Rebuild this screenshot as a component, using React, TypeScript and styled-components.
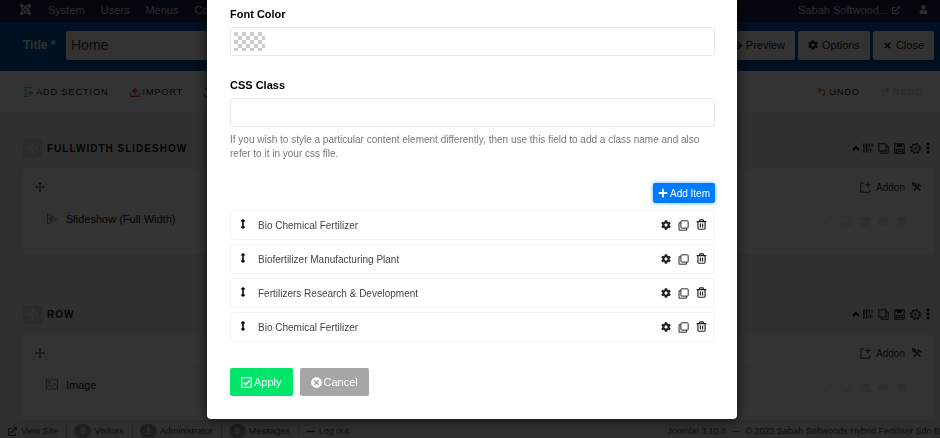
import React from "react";
import styled, { createGlobalStyle } from "styled-components";
import {
  FaArrowsAltV,
  FaCog,
  FaExternalLinkAlt,
  FaEye,
  FaJoomla,
  FaMinus,
  FaPlus,
  FaTimes,
  FaTimesCircle,
  FaUser,
} from "react-icons/fa";

const GlobalStyle = createGlobalStyle`
  *, *::before, *::after { box-sizing: border-box; }
  body {
    margin: 0;
    overflow: hidden;
    font-family: "Liberation Sans", Arial, sans-serif;
    font-size: 11px;
    color: #222;
  }
  button, input { font: inherit; color: inherit; }
  button { cursor: pointer; }
  svg { display: block; flex: none; }
`;

/* ---------- icons ---------- */

type IconProps = { size?: number };

const Line = ({ size = 12, children }: IconProps & { children: React.ReactNode }) => (
  <svg width={size} height={size} viewBox="0 0 16 16" fill="none" stroke="currentColor" strokeWidth="1.4" aria-hidden="true">
    {children}
  </svg>
);

const CloneIcon = ({ size }: IconProps) => (
  <Line size={size}>
    <rect x="4.2" y="1.2" width="10.6" height="10.6" rx="1" />
    <path d="M4 4H1.5v10.8h10.8V12" />
  </Line>
);

const CopyDownIcon = ({ size }: IconProps) => (
  <Line size={size}>
    <rect x="1.2" y="1.2" width="10.4" height="10.4" />
    <path d="M12 4.4h2.8v10.4H4.4V12" />
  </Line>
);

const TrashIcon = ({ size }: IconProps) => (
  <Line size={size}>
    <path d="M1 3.8h14M5.2 3.6V2.2c0-.7.4-1 1-1h3.6c.6 0 1 .3 1 1v1.4M2.8 4v9.6c0 .8.4 1.3 1.2 1.3h8c.8 0 1.2-.5 1.2-1.3V4M6.4 6.6v5.6M9.6 6.6v5.6" strokeWidth="1.7" />
  </Line>
);

const SaveIcon = ({ size }: IconProps) => (
  <Line size={size}>
    <path d="M1.2 1.2h13.6v13.6H1.2zM3.5 14.5V9.2h9v5.3M5 12h6" />
    <path d="M4.5 1.5h7v3.6h-7z" fill="currentColor" />
  </Line>
);

const CogLineIcon = ({ size }: IconProps) => (
  <Line size={size}>
    <circle cx="8" cy="8" r="5.8" />
    <circle cx="8" cy="8" r="7" strokeWidth="1.8" strokeDasharray="2.75 2.75" />
    <circle cx="8" cy="8" r="1.8" />
  </Line>
);

const DotsIcon = () => (
  <svg width="4" height="12" viewBox="0 0 4 12" fill="currentColor" aria-hidden="true">
    <circle cx="2" cy="2" r="1.5" />
    <circle cx="2" cy="6" r="1.5" />
    <circle cx="2" cy="10" r="1.5" />
  </svg>
);

const ChevronUpIcon = () => (
  <svg width="8" height="6" viewBox="0 0 8 6" fill="none" stroke="currentColor" strokeWidth="2" aria-hidden="true">
    <path d="M1 5l3-3 3 3" />
  </svg>
);

const ColumnsIcon = () => (
  <svg width="10" height="10" viewBox="0 0 11 10" fill="none" stroke="currentColor" aria-hidden="true">
    <path d="M1 0v10M4 0v10" strokeWidth="1.5" />
    <path d="M7 0v4M10 0v4M8 5v5M5.5 7.5h5" strokeWidth="1.2" />
  </svg>
);

const MoveIcon = ({ size }: IconProps) => (
  <Line size={size}>
    <circle cx="8" cy="8" r="2.2" />
    <path d="M8 2v2.5M8 11.5V14M2 8h2.5M11.5 8H14" strokeWidth="1.2" />
    <path d="M8 0l2.4 3H5.6zM8 16l2.4-3H5.6zM0 8l3-2.4v4.8zM16 8l-3-2.4v4.8z" fill="currentColor" stroke="none" />
  </Line>
);

const AddSectionIcon = () => (
  <Line size={10}>
    <path d="M1 1h14M1 5h7M1 9h5M1 15h9M1 12h5M11.5 5v9M7 9.5h9" />
  </Line>
);

const ImportIcon = () => (
  <Line size={10}>
    <path d="M1 9.5V15h14V9.5M8 12V3" strokeWidth="2" />
    <path d="M3.5 7L8 2l4.5 5z" fill="currentColor" />
  </Line>
);

const ExportIcon = () => (
  <Line size={10}>
    <path d="M1 9.5V15h14V9.5M8 1v8" strokeWidth="2" />
    <path d="M1 3l4-1 2 4z" fill="currentColor" />
  </Line>
);

const UndoIcon = () => (
  <Line size={9}>
    <path d="M6 1L2 5.2l4 4.3M2 5.2h7c7 0 6.5 8 1 9.5" strokeWidth="2.4" />
  </Line>
);

const RedoIcon = () => (
  <Line size={9}>
    <path d="M10 1l4 4.2-4 4.3M14 5.2H7c-7 0-6.5 8-1 9.5" strokeWidth="2.4" />
  </Line>
);

const AddonIcon = () => (
  <Line size={11}>
    <path d="M6 1.5H1.2v13.3h13.3V11M11.5 0v8M7.5 4h8" />
  </Line>
);

const ToolsIcon = () => (
  <Line size={10}>
    <path d="M4 4l9.5 10M12 4.5L3 14" strokeWidth="2.5" />
    <path d="M1 1l1 4 3 .5L6 3zM10 1.5c0 3 1 4.5 5 4.5" strokeWidth="2" />
  </Line>
);

const SlideshowIcon = () => (
  <Line size={12}>
    <path d="M2 1v14M2 1l12.5 7L2 15M5 5.5v5L9.5 8z" strokeWidth="1.2" />
  </Line>
);

const PictureIcon = () => (
  <svg width="12" height="11" viewBox="0 0 13 11" fill="none" stroke="currentColor" aria-hidden="true">
    <path d="M.5.5h12v10H.5zM1 8l3-2.5L6 8l3-4 3 4" />
    <circle cx="3.5" cy="3.3" r="1" />
  </svg>
);

const PencilIcon = () => (
  <Line size={11}>
    <path d="M1.5 14.5l.8-3L12 1.8l2.3 2.3-9.7 9.7z" />
  </Line>
);

const CheckBoxIcon = () => (
  <Line size={11}>
    <path d="M1 1h14v14H1z" strokeWidth="1.8" />
    <path d="M4 8l3 3 5.5-6" strokeWidth="2.2" />
  </Line>
);

/* ---------- page behind the dialog ---------- */

const Page = styled.div`
  display: flex;
  flex-direction: column;
  height: 100vh;
  overflow: hidden;
  background: #eee;
`;

const NavBar = styled.nav`
  display: flex;
  align-items: center;
  flex: none;
  gap: 16px;
  height: 22px;
  padding: 0 4px 3px 19px;
  background: #10223e;
  color: #d9d9d9;
  font-size: 11px;
  white-space: nowrap;
  a { color: inherit; text-decoration: none; }
`;

const NavUser = styled.a`
  display: flex;
  align-items: center;
  gap: 4px;
  margin-left: auto;
`;

const UserMenu = styled.button`
  display: flex;
  padding: 0 8px 0 3px;
  border: 0;
  background: none;
`;

const TitleBar = styled.header`
  display: flex;
  align-items: center;
  flex: none;
  gap: 3px;
  height: 49px;
  padding: 0 6px 3px 23px;
  background: #00509f;
`;

const TitleLabel = styled.label`
  width: 40px;
  color: #eee;
  font-size: 12px;
  font-weight: bold;
  white-space: nowrap;
`;

const TitleInput = styled.input`
  flex: 1;
  min-width: 0;
  height: 29px;
  padding: 0 5px;
  border: 0;
  border-radius: 2px;
  background: #fff;
  color: #333;
  font-size: 14px;
`;

const HeaderButton = styled.button`
  display: flex;
  align-items: center;
  justify-content: center;
  gap: 4px;
  height: 29px;
  padding: 0 10px;
  border: 0;
  border-radius: 2px;
  background: #fff;
  color: #222;
  font-size: 11px;
`;

const ToolBar = styled.div`
  display: flex;
  align-items: center;
  flex: none;
  gap: 21px;
  height: 42px;
  padding: 0 17px 0 23px;
  border-bottom: 1px solid #e4e4e4;
  background: #fff;
`;

const ToolButton = styled.button<{ $tint: string; $faded?: boolean; $end?: boolean }>`
  display: flex;
  align-items: center;
  gap: 3px;
  margin-left: ${(p) => (p.$end ? "auto" : "0")};
  padding: 0;
  border: 0;
  background: none;
  color: ${(p) => (p.$faded ? "#ccc" : "#111")};
  font-size: 9px;
  letter-spacing: 1px;
  svg { color: ${(p) => p.$tint}; }
`;

const Builder = styled.main`
  flex: 1;
  min-height: 0;
  padding: 25px 6px 0 23px;
  overflow: hidden;
`;

const Section = styled.section`
  margin-bottom: 50px;
`;

const SectionHead = styled.div`
  display: flex;
  align-items: center;
  gap: 5px;
  height: 20px;
  margin-bottom: 11px;
  padding-right: 4px;
  color: #111;
`;

const SectionName = styled.h2`
  flex: 1;
  margin: 0;
  font-size: 10px;
  letter-spacing: 1px;
`;

const LayoutTools = styled.div`
  display: flex;
  align-items: center;
  gap: 3px;
`;

const Handle = styled.button`
  display: flex;
  align-items: center;
  justify-content: center;
  width: 19px;
  height: 19px;
  padding: 0;
  border: 0;
  border-radius: 2px;
  background: #d6d6d6;
  color: #fff;
`;

const IconButton = styled.button`
  display: flex;
  padding: 0;
  border: 0;
  background: none;
`;

const Columns = styled.div`
  display: grid;
  grid-auto-flow: column;
  grid-auto-columns: 1fr;
  background: #fff;
`;

const Column = styled.div`
  padding: 10px 12px 17px;
`;

const ColumnHead = styled.div`
  display: flex;
  align-items: center;
  justify-content: space-between;
  height: 16px;
  margin-bottom: 6px;
  color: #333;
`;

const ColumnTools = styled.div`
  display: flex;
  align-items: center;
  gap: 7px;
  font-size: 10px;
`;

const AddonButton = styled(IconButton)`
  align-items: center;
  gap: 5px;
`;

const AddonBox = styled.div<{ $tall?: boolean }>`
  display: flex;
  align-items: flex-start;
  gap: 8px;
  height: ${(p) => (p.$tall ? "50px" : "36px")};
  padding: 11px 14px 0 10px;
  border: 1px solid #eee;
  color: #111;
  svg { color: #777; }
`;

const AddonTools = styled.div`
  display: flex;
  align-items: center;
  gap: 8px;
  margin-left: auto;
  padding-top: 3px;
  svg { color: #ddd; }
`;

const StatusBar = styled.footer`
  display: flex;
  align-items: center;
  flex: none;
  gap: 8px;
  height: 18px;
  padding: 3px 0 0 8px;
  border-top: 1px solid #e4e4e4;
  background: #ebebeb;
  color: #444;
  font-size: 9px;
  white-space: nowrap;
  overflow: hidden;
  a { display: flex; align-items: center; gap: 4px; color: inherit; text-decoration: none; }
`;

const StatusItem = styled.span`
  display: flex;
  align-items: center;
  gap: 3px;
  padding-left: 7px;
  border-left: 1px solid #bbb;
`;

const Count = styled.b`
  padding: 0 6px;
  border-radius: 7px;
  background: #999;
  color: #fff;
  font-size: 9px;
  line-height: 14px;
`;

const Copyright = styled.span`
  margin-left: auto;
`;

/* ---------- dialog ---------- */

const Backdrop = styled.div`
  position: fixed;
  inset: 0;
  display: flex;
  align-items: flex-start;
  justify-content: center;
  padding-left: 4px;
  background: rgba(0, 0, 0, 0.8);
`;

const Dialog = styled.form`
  width: 100%;
  max-width: 530px;
  padding: 7px 22px 23px 23px;
  border-radius: 0 0 4px 4px;
  background: #fff;
  box-shadow: 0 2px 12px rgba(0, 0, 0, 0.7);
`;

const Field = styled.div`
  display: flex;
  flex-direction: column;
  margin-bottom: 22px;
`;

const FieldLabel = styled.label`
  margin-bottom: 6px;
  color: #000;
  font-size: 11px;
  font-weight: bold;
  line-height: 14px;
`;

const TextInput = styled.input`
  width: 100%;
  height: 29px;
  padding: 0 8px;
  border: 1px solid #e8e8e8;
  border-radius: 3px;
  background: #fff;
`;

const ColorBox = styled.div`
  display: flex;
  align-items: center;
  height: 29px;
  padding: 0 3px;
  border: 1px solid #e8e8e8;
  border-radius: 3px;
`;

const Swatch = styled.button`
  width: 31px;
  height: 19px;
  padding: 0;
  border: 0;
  border-radius: 2px;
  background: repeating-conic-gradient(#fff 0 25%, #ccc 0 50%) 0 0 / 8px 8px;
`;

const Help = styled.p`
  margin: 6px 0 0;
  color: #777;
  font-size: 10px;
  line-height: 14px;
`;

const AddItem = styled.button`
  display: flex;
  align-items: center;
  gap: 2px;
  height: 20px;
  margin: 0 0 7px auto;
  padding: 0 5px;
  border: 0;
  border-radius: 2px;
  background: #007bff;
  box-shadow: 0 0 4px rgba(0, 123, 255, 0.6);
  color: #fff;
  font-size: 10px;
`;

const ItemList = styled.ul`
  display: flex;
  flex-direction: column;
  gap: 4px;
  margin: 0 0 26px;
  padding: 0;
  list-style: none;
`;

const Item = styled.li`
  display: flex;
  align-items: center;
  height: 30px;
  padding: 0 7px;
  border: 1px solid #f4f4f4;
  border-radius: 3px;
  color: #444;
  font-size: 10px;
`;

const Grip = styled(IconButton)`
  width: 20px;
  padding: 0 0 2px;
  color: #000;
`;

const ItemTitle = styled.span`
  flex: 1;
`;

const ItemTools = styled.div`
  display: flex;
  align-items: center;
  gap: 7px;
  color: #222;
`;

const DeleteButton = styled(IconButton)`
  padding-bottom: 2px;
`;

const Actions = styled.div`
  display: flex;
  gap: 7px;
`;

const ActionButton = styled.button<{ $color: string }>`
  display: flex;
  align-items: center;
  gap: 2px;
  height: 28px;
  padding: 0 11px;
  border: 0;
  border-radius: 2px;
  background: ${(p) => p.$color};
  color: #fff;
  font-size: 11px;
`;

/* ---------- data and composition ---------- */

const items = [
  "Bio Chemical Fertilizer",
  "Biofertilizer Manufacturing Plant",
  "Fertilizers Research & Development",
  "Bio Chemical Fertilizer",
];

const SectionHeader = ({ name }: { name: string }) => (
  <SectionHead>
    <Handle type="button" aria-label="Move section"><MoveIcon size={11} /></Handle>
    <SectionName>{name}</SectionName>
    <LayoutTools>
      <IconButton aria-label="Collapse"><ChevronUpIcon /></IconButton>
      <IconButton aria-label="Columns"><ColumnsIcon /></IconButton>
    </LayoutTools>
    <IconButton aria-label="Duplicate"><CopyDownIcon size={11} /></IconButton>
    <IconButton aria-label="Save"><SaveIcon size={11} /></IconButton>
    <IconButton aria-label="Settings"><CogLineIcon size={11} /></IconButton>
    <IconButton aria-label="More"><DotsIcon /></IconButton>
  </SectionHead>
);

const AddonControls = () => (
  <ColumnTools>
    <AddonButton><AddonIcon />Addon</AddonButton>
    <IconButton aria-label="Column options"><ToolsIcon /></IconButton>
  </ColumnTools>
);

const AddonActions = () => (
  <AddonTools>
    <IconButton aria-label="Edit addon"><PencilIcon /></IconButton>
    <IconButton aria-label="Duplicate addon"><CopyDownIcon size={11} /></IconButton>
    <IconButton aria-label="Save addon"><SaveIcon size={10} /></IconButton>
    <IconButton aria-label="Toggle addon"><FaEye size={11} /></IconButton>
    <IconButton aria-label="Delete addon"><TrashIcon size={10} /></IconButton>
  </AddonTools>
);

export default function App() {
  return (
    <>
      <GlobalStyle />
      <Page>
        <NavBar>
          <a href="#home" aria-label="Joomla"><FaJoomla size={13} /></a>
          <a href="#system">System</a>
          <a href="#users">Users</a>
          <a href="#menus">Menus</a>
          <a href="#content">Content</a>
          <NavUser href="#site">Sabah Softwood...<FaExternalLinkAlt size={8} /></NavUser>
          <UserMenu aria-label="User menu"><FaUser size={9} /></UserMenu>
        </NavBar>
        <TitleBar>
          <TitleLabel htmlFor="page-title">Title *</TitleLabel>
          <TitleInput id="page-title" defaultValue="Home" />
          <HeaderButton><FaEye size={11} />Preview</HeaderButton>
          <HeaderButton><FaCog size={10} />Options</HeaderButton>
          <HeaderButton><FaTimes size={9} />Close</HeaderButton>
        </TitleBar>
        <ToolBar>
          <ToolButton $tint="#5cb85c"><AddSectionIcon />ADD SECTION</ToolButton>
          <ToolButton $tint="#e0402a"><ImportIcon />IMPORT</ToolButton>
          <ToolButton $tint="#f08020" aria-label="Export"><ExportIcon /></ToolButton>
          <ToolButton $tint="#f08020" $end><UndoIcon />UNDO</ToolButton>
          <ToolButton $tint="#ccc" $faded><RedoIcon />REDO</ToolButton>
        </ToolBar>
        <Builder>
          <Section>
            <SectionHeader name="FULLWIDTH SLIDESHOW" />
            <Columns>
              <Column>
                <ColumnHead><MoveIcon size={10} /><AddonControls /></ColumnHead>
                <AddonBox><SlideshowIcon />Slideshow (Full Width)<AddonActions /></AddonBox>
              </Column>
            </Columns>
          </Section>
          <Section>
            <SectionHeader name="ROW" />
            <Columns>
              <Column>
                <ColumnHead><MoveIcon size={10} /><AddonControls /></ColumnHead>
                <AddonBox><PictureIcon />Image<AddonActions /></AddonBox>
              </Column>
              <Column>
                <ColumnHead><MoveIcon size={10} /><AddonControls /></ColumnHead>
                <AddonBox $tall><AddonActions /></AddonBox>
              </Column>
            </Columns>
          </Section>
        </Builder>
        <StatusBar>
          <a href="#view"><FaExternalLinkAlt size={9} />View Site</a>
          <StatusItem><Count>0</Count>Visitors</StatusItem>
          <StatusItem><Count>1</Count>Administrator</StatusItem>
          <StatusItem><Count>0</Count>Messages</StatusItem>
          <StatusItem><a href="#logout"><FaMinus size={9} />Log out</a></StatusItem>
          <Copyright>Joomla! 3.10.8 &nbsp;—&nbsp; © 2023 Sabah Softwoods Hybrid Fertiliser Sdn B</Copyright>
        </StatusBar>
      </Page>

      <Backdrop>
        <Dialog role="dialog" aria-modal="true" onSubmit={(e) => e.preventDefault()}>
          <Field>
            <FieldLabel htmlFor="font-color">Font Color</FieldLabel>
            <ColorBox><Swatch id="font-color" type="button" /></ColorBox>
          </Field>
          <Field>
            <FieldLabel htmlFor="css-class">CSS Class</FieldLabel>
            <TextInput id="css-class" type="text" />
            <Help>
              If you wish to style a particular content element differently, then use this field to add a class name and also refer to it in your css file.
            </Help>
          </Field>
          <AddItem type="button"><FaPlus size={10} />Add Item</AddItem>
          <ItemList>
            {items.map((title, i) => (
              <Item key={i}>
                <Grip type="button" aria-label="Reorder"><FaArrowsAltV size={10} /></Grip>
                <ItemTitle>{title}</ItemTitle>
                <ItemTools>
                  <IconButton type="button" aria-label="Edit"><FaCog size={10} /></IconButton>
                  <IconButton type="button" aria-label="Duplicate"><CloneIcon size={11} /></IconButton>
                  <DeleteButton type="button" aria-label="Delete"><TrashIcon size={11} /></DeleteButton>
                </ItemTools>
              </Item>
            ))}
          </ItemList>
          <Actions>
            <ActionButton type="submit" $color="#00e66b"><CheckBoxIcon />Apply</ActionButton>
            <ActionButton type="button" $color="#a6a6a6"><FaTimesCircle size={11} />Cancel</ActionButton>
          </Actions>
        </Dialog>
      </Backdrop>
    </>
  );
}
